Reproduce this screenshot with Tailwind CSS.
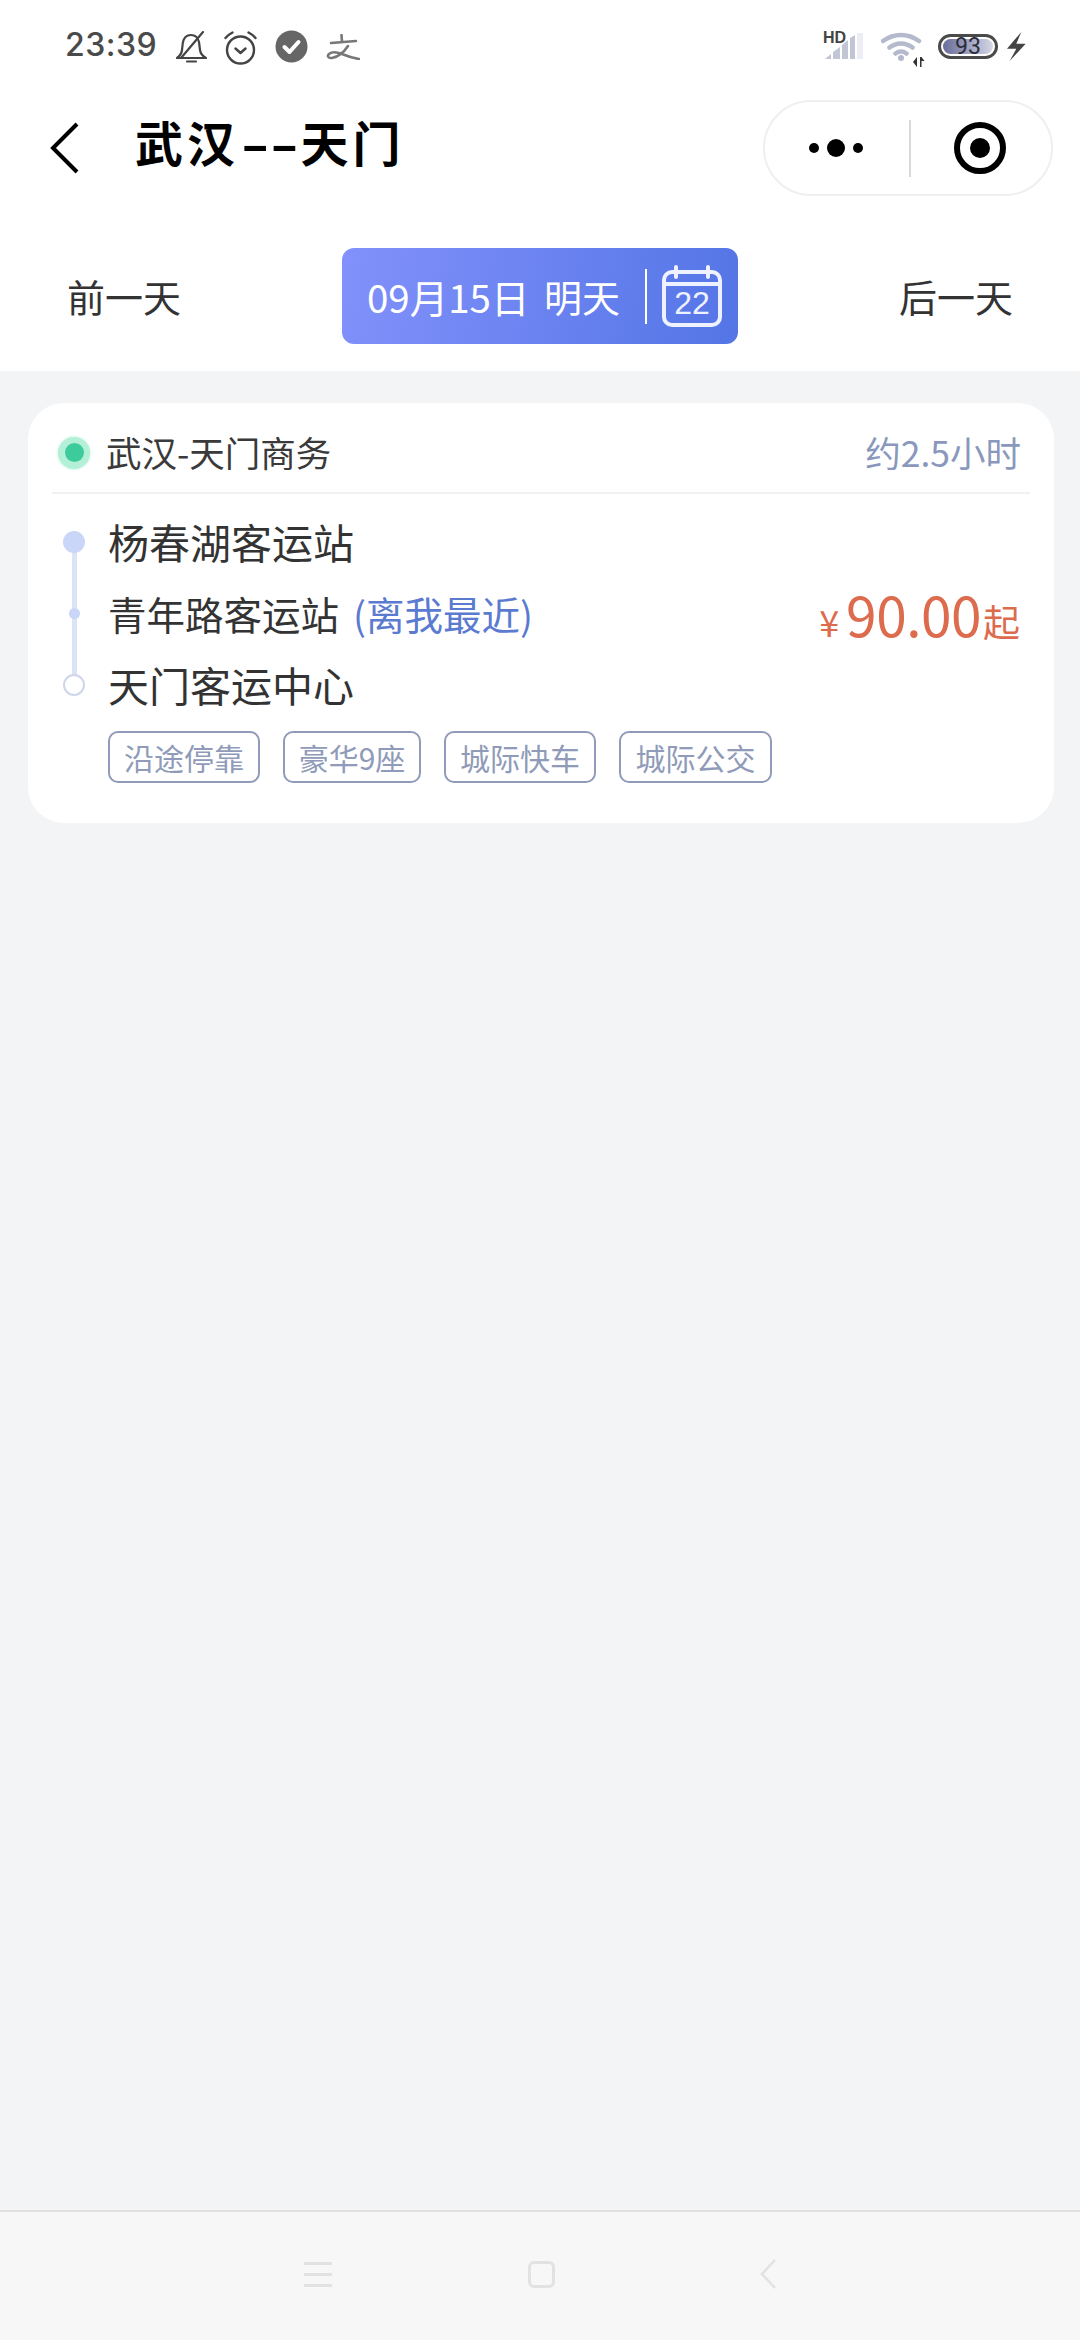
<!DOCTYPE html>
<html lang="zh-CN">
  <head>
    <meta charset="UTF-8" />
    <meta name="viewport" content="width=device-width, initial-scale=1.0" />
    <title>武汉--天门</title>
    <script src="https://cdn.jsdelivr.net/npm/@tailwindcss/browser@4"></script>
  </head>
  <body class="font-['Noto_Sans_CJK_SC','Noto_Sans',sans-serif]">
    <div class="w-[1080px] h-[2340px] flex flex-col bg-[#f3f4f6] overflow-hidden">
      <!-- status bar -->
      <div class="h-[92px] shrink-0 bg-white flex items-center justify-between pl-[65px] pr-[53px] pt-[2px]">
        <div class="flex items-center">
          <span class="font-['Inter',sans-serif] text-[32px] leading-none font-medium text-[#4a4a4a] tracking-[0.5px] -mt-[5px] w-[87px] whitespace-nowrap">23:39</span>
          <svg class="ml-[24px]" width="31" height="32" viewBox="0 0 31 32" fill="none" stroke="#444" stroke-width="2.2">
            <path d="M1 27c3-2 4.500-4 5-8l.8-7c.8-5 4-8 8.200-8s7 2.500 8 7l1 8c.5 4 2.500 6 6 8z" stroke-linejoin="round" />
            <path d="M11 30.500h9M27 1 5 27" stroke-linecap="round" />
          </svg>
          <svg class="ml-[16px]" width="35" height="35" viewBox="0 0 34 35" fill="none" stroke="#444" stroke-width="2.400" stroke-linecap="round" stroke-linejoin="round">
            <circle cx="17" cy="20" r="13.500" />
            <path d="M12 18.500l5 4.500 5-4.500M2 8c2-2.500 4-4 7-5.500M32 8c-2-2.500-4-4-7-5.500" />
          </svg>
          <svg class="ml-[17px] -mt-[1px]" width="33" height="33" viewBox="0 0 33 33">
            <circle cx="16.500" cy="16.500" r="16" fill="#666" />
            <path d="M9.500 17l5 5 9-10" fill="none" stroke="#fff" stroke-width="4" stroke-linecap="round" stroke-linejoin="round" />
          </svg>
          <svg class="ml-[18px]" width="34" height="26" viewBox="0 0 34 26" fill="none" stroke="#777" stroke-width="2.600" stroke-linecap="round">
            <path d="M5 9l25-2M15.500 1l.5 7M22 12c-4 6-10 11-16 12-4 .5-5-2-3-4 3-2.500 8-2 13 0 6 2.500 11 4 17 5" />
          </svg>
        </div>
        <div class="flex items-center">
          <div class="relative w-[40px] h-[30px] -mt-[3px]">
            <svg class="absolute left-0 top-0" width="40" height="30" viewBox="0 0 40 30">
              <path d="M1 28l6-5v5zM9 21l7-5v12H9zM18 14l6-5v19h-6zM26 7l5-3v24h-5z" fill="#c1c5d6" />
              <path d="M33 2h6v26h-6z" fill="#eceef4" />
            </svg>
            <span class="absolute -left-[1px] -top-[1px] font-['Liberation_Sans',sans-serif] text-[16px] leading-[16px] font-bold text-[#444]">HD</span>
          </div>
          <div class="relative ml-[17px] w-[44px] h-[36px] mt-[6px]">
            <svg class="absolute left-0 top-0" width="44" height="36" viewBox="0 0 44 36" fill="none" stroke="#b4b9cc" stroke-width="4.500" stroke-linecap="round">
              <path d="M2 9c11-8 25-8 36 0M8.500 15.500c7-5.500 16-5.500 23 0M14.500 21.500c3.500-2.500 7.500-2.500 11 0" />
              <circle cx="20" cy="26" r="1.500" fill="#b4b9cc" stroke-width="3" />
            </svg>
            <svg class="absolute left-[32px] top-[25px]" width="12" height="10" viewBox="0 0 12 10" fill="#333">
              <path d="M4 0v10L0 5zM7 0h1.500l3 4H8.500v6H7z" />
            </svg>
          </div>
          <div class="ml-[13px] w-[60px] h-[25px] rounded-full border-[3px] border-[#4a4a4a] bg-white p-[2px] -mt-[2px]">
            <div class="w-full h-full rounded-full bg-linear-to-r from-[#6a6d9a] to-[#d5d7e4] flex items-center justify-center">
              <span class="font-['Roboto',sans-serif] text-[23px] leading-none text-[#2c2c3a]">93</span>
            </div>
          </div>
          <svg class="ml-[9px] -mt-[2px]" width="20" height="29" viewBox="0 0 20 29" fill="#444">
            <path d="M14.300 0 0 16.700h9.300L2.700 29l16-17.300H9.300z" />
          </svg>
        </div>
      </div>

      <!-- title bar -->
      <div class="h-[112px] shrink-0 bg-white flex items-center justify-between pl-[50px] pr-[27px]">
        <div class="flex items-center">
          <svg width="32" height="52" viewBox="0 0 32 52" fill="none" stroke="#000" stroke-width="4">
            <path d="M27 2 3 26l24 24" />
          </svg>
          <span class="ml-[53px] -mt-[14px] text-[48px] leading-none font-bold text-black tracking-[4px] whitespace-nowrap">武汉<span class="inline-block scale-x-[1.65] mx-[13px] tracking-normal">--</span>天门</span>
        </div>
        <div class="w-[290px] h-[96px] rounded-full border-2 border-[#efefef] bg-white flex items-center">
          <div class="w-[144px] flex items-center justify-center gap-[8px] pr-[2px]">
            <span class="w-[10px] h-[10px] rounded-full bg-black"></span>
            <span class="w-[18px] h-[18px] rounded-full bg-black"></span>
            <span class="w-[10px] h-[10px] rounded-full bg-black"></span>
          </div>
          <div class="w-[2px] h-[57px] bg-[#d8d8d8]"></div>
          <div class="flex-1 flex items-center justify-center pr-[2px]">
            <div class="w-[52px] h-[52px] rounded-full border-[6px] border-black flex items-center justify-center">
              <span class="w-[20px] h-[20px] rounded-full bg-black"></span>
            </div>
          </div>
        </div>
      </div>

      <!-- date row -->
      <div class="shrink-0 bg-white flex items-center justify-between pl-[67px] pr-[67px] pt-[44px] pb-[27px]">
        <span class="text-[38px] leading-none text-[#333]">前一天</span>
        <div class="w-[396px] h-[96px] rounded-[12px] bg-linear-[100deg] from-[#8291fb] to-[#5475e6] flex items-center pl-[25px] text-white">
          <span class="text-[38.500px] leading-none w-[177px] shrink-0 whitespace-nowrap">09月15日</span>
          <span class="text-[38px] leading-none w-[76px] shrink-0 whitespace-nowrap">明天</span>
          <div class="ml-[25px] w-[2px] h-[55px] bg-white shrink-0"></div>
          <div class="relative ml-[14px] w-[62px] h-[62px] shrink-0">
            <svg class="absolute left-0 top-0" width="62" height="62" viewBox="0 0 62 62" fill="none" stroke="#eef1ff" stroke-width="4" stroke-linecap="round">
              <rect x="3" y="7" width="56" height="53" rx="8" />
              <path d="M3 19h56M15 2v10M47 2v10" />
            </svg>
            <span class="absolute left-0 right-0 top-[20px] text-center font-['Liberation_Sans',sans-serif] text-[32px] leading-[36px] text-[#eef1ff]">22</span>
          </div>
        </div>
        <span class="text-[38px] leading-none text-[#333]">后一天</span>
      </div>

      <!-- list -->
      <div class="flex-1 pl-[28px] pt-[32px]">
        <div class="w-[1026px] h-[420px] rounded-[36px] bg-white px-[24px]">
          <div class="h-[91px] border-b-2 border-[#f0f1f3] flex items-center justify-between pr-[9px] pt-[9px]">
            <div class="flex items-center">
              <div class="w-[32px] h-[32px] ml-[6px] mt-[1px] rounded-full bg-[#b4efd8] shadow-[0_0_3px_#b4efd8] flex items-center justify-center">
                <span class="w-[19px] h-[19px] rounded-full bg-[#3ecb9b]"></span>
              </div>
              <span class="ml-[16px] text-[35.500px] leading-none text-[#3a3a3a]">武汉-天门商务</span>
            </div>
            <span class="text-[35.500px] leading-none text-[#8a98bd]">约2.5小时</span>
          </div>

          <div class="flex items-center justify-between pr-[10px] pt-[12px]">
            <div class="relative">
              <div class="absolute left-[20px] top-[35px] w-[5px] h-[140px] bg-[#dde3f7]"></div>
              <div class="relative h-[71.500px] flex items-center">
                <div class="w-[44px] flex justify-center">
                  <span class="w-[22px] h-[22px] rounded-full bg-[#c9d6f7]"></span>
                </div>
                <span class="ml-[12px] text-[41px] leading-none text-[#333]">杨春湖客运站</span>
              </div>
              <div class="relative h-[71.500px] flex items-center">
                <div class="w-[44px] flex justify-center">
                  <span class="w-[11px] h-[11px] rounded-full bg-[#c9d6f7]"></span>
                </div>
                <span class="ml-[12px] text-[38.500px] leading-none text-[#333]">青年路客运站<span class="ml-[14px] text-[#5b7bd0]">(离我最近)</span></span>
              </div>
              <div class="relative h-[71.500px] flex items-center">
                <div class="w-[44px] flex justify-center">
                  <span class="w-[22px] h-[22px] rounded-full border-2 border-[#d0d6ea] bg-white"></span>
                </div>
                <span class="ml-[12px] text-[41px] leading-none text-[#333]">天门客运中心</span>
              </div>
            </div>
            <div class="flex items-baseline text-[#dd6b4d] pt-[1px]">
              <span class="text-[36px] leading-none mr-[7px]">¥</span>
              <span class="text-[55px] leading-none tracking-[-0.5px]">90.00</span>
              <span class="text-[37px] leading-none ml-[2px]">起</span>
            </div>
          </div>

          <div class="flex gap-[23px] pl-[56px] mt-[10px]">
            <span class="w-[152px] h-[52px] rounded-[10px] border-2 border-[#8f9bb8] flex items-center justify-center text-[30px] leading-none text-[#8f9bb8]">沿途停靠</span>
            <span class="w-[138px] h-[52px] rounded-[10px] border-2 border-[#8f9bb8] flex items-center justify-center text-[30px] leading-none text-[#8f9bb8]">豪华9座</span>
            <span class="w-[152px] h-[52px] rounded-[10px] border-2 border-[#8f9bb8] flex items-center justify-center text-[30px] leading-none text-[#8f9bb8]">城际快车</span>
            <span class="w-[153px] h-[52px] rounded-[10px] border-2 border-[#8f9bb8] flex items-center justify-center text-[30px] leading-none text-[#8f9bb8]">城际公交</span>
          </div>
        </div>
      </div>

      <!-- system nav -->
      <div class="h-[130px] shrink-0 bg-[#f7f7f7] border-t-2 border-[#e0e0e0] flex items-center pb-[4px]">
        <div class="ml-[304px] w-[28px] flex flex-col gap-[8px]">
          <span class="h-[3px] bg-[#e2e2e2]"></span>
          <span class="h-[3px] bg-[#e2e2e2]"></span>
          <span class="h-[3px] bg-[#e2e2e2]"></span>
        </div>
        <div class="ml-[196px] w-[27px] h-[27px] rounded-[6px] border-[3px] border-[#e2e2e2]"></div>
        <svg class="ml-[205px]" width="16" height="30" viewBox="0 0 16 30" fill="none" stroke="#e2e2e2" stroke-width="2.500">
          <path d="M15 1 2 15l13 14" />
        </svg>
      </div>
    </div>
  </body>
</html>
